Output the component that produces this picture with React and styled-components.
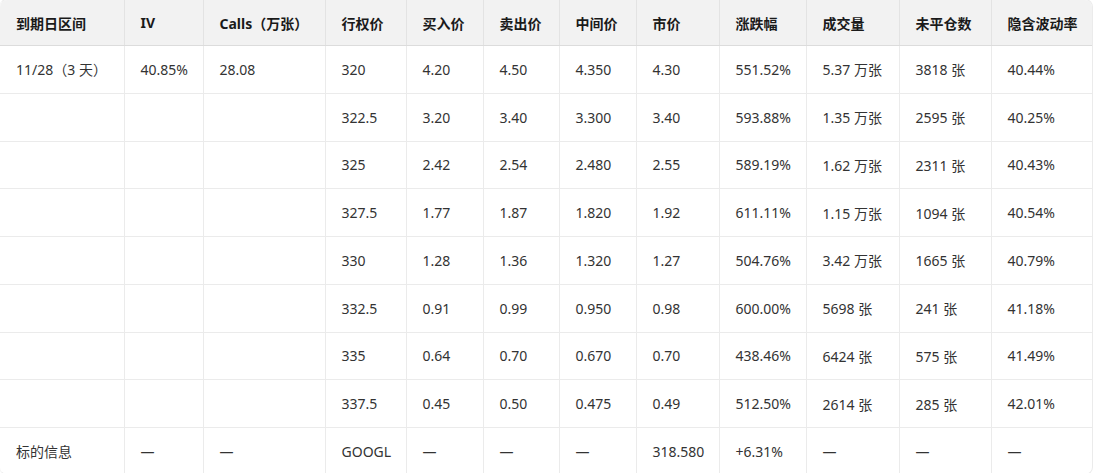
import React from "react";
import styled, { createGlobalStyle } from "styled-components";

const Global = createGlobalStyle`
  html, body { margin: 0; padding: 0; background: #ffffff; }
  body { font-family: "Segoe UI", "Noto Sans", "Noto Sans CJK SC", sans-serif; }
`;

const Wrap = styled.div`
  width: 1094px;
  height: 476px;
  border: 1px solid #ebebeb;
  border-left-color: #f6f6f6;
  border-radius: 8px;
  overflow: hidden;
  box-sizing: border-box;
  margin-left: -1px;
  margin-top: -1px;
`;

const Table = styled.table`
  border-collapse: collapse;
  table-layout: fixed;
  width: 1094px;
  font-size: 14px;
  color: #333;
`;

const Th = styled.th`
  height: 45px;
  padding: 0 0 0 16px;
  text-align: left;
  font-weight: 700;
  color: #1a1a1a;
  background: #f2f2f2;
  border-right: 1px solid #e3e3e3;
  border-bottom: 1px solid #dcdcdc;
  white-space: nowrap;
  &:last-child { border-right: none; }
`;

const Td = styled.td`
  height: 46.75px;
  padding: 0 0 0 16px;
  text-align: left;
  border-right: 1px solid #ebebeb;
  border-bottom: 1px solid #ebebeb;
  white-space: nowrap;
  &:last-child { border-right: none; }
`;

const widths = [124, 79, 122, 81, 77, 76, 77, 83, 87, 93, 92, 103];
const heads = ["到期日区间", "IV", "Calls（万张）", "行权价", "买入价", "卖出价", "中间价", "市价", "涨跌幅", "成交量", "未平仓数", "隐含波动率"];

const rows = [
  ["11/28（3 天）", "40.85%", "28.08", "320", "4.20", "4.50", "4.350", "4.30", "551.52%", "5.37 万张", "3818 张", "40.44%"],
  ["", "", "", "322.5", "3.20", "3.40", "3.300", "3.40", "593.88%", "1.35 万张", "2595 张", "40.25%"],
  ["", "", "", "325", "2.42", "2.54", "2.480", "2.55", "589.19%", "1.62 万张", "2311 张", "40.43%"],
  ["", "", "", "327.5", "1.77", "1.87", "1.820", "1.92", "611.11%", "1.15 万张", "1094 张", "40.54%"],
  ["", "", "", "330", "1.28", "1.36", "1.320", "1.27", "504.76%", "3.42 万张", "1665 张", "40.79%"],
  ["", "", "", "332.5", "0.91", "0.99", "0.950", "0.98", "600.00%", "5698 张", "241 张", "41.18%"],
  ["", "", "", "335", "0.64", "0.70", "0.670", "0.70", "438.46%", "6424 张", "575 张", "41.49%"],
  ["", "", "", "337.5", "0.45", "0.50", "0.475", "0.49", "512.50%", "2614 张", "285 张", "42.01%"],
  ["标的信息", "—", "—", "GOOGL", "—", "—", "—", "318.580", "+6.31%", "—", "—", "—"],
];

export default function App() {
  return (
    <>
      <Global />
      <Wrap>
        <Table>
          <colgroup>
            {widths.map((w, i) => (
              <col key={i} style={{ width: w }} />
            ))}
          </colgroup>
          <thead>
            <tr>
              {heads.map((h) => (
                <Th key={h}>{h}</Th>
              ))}
            </tr>
          </thead>
          <tbody>
            {rows.map((r, i) => (
              <tr key={i}>
                {r.map((c, j) => (
                  <Td key={j}>{c}</Td>
                ))}
              </tr>
            ))}
          </tbody>
        </Table>
      </Wrap>
    </>
  );
}
